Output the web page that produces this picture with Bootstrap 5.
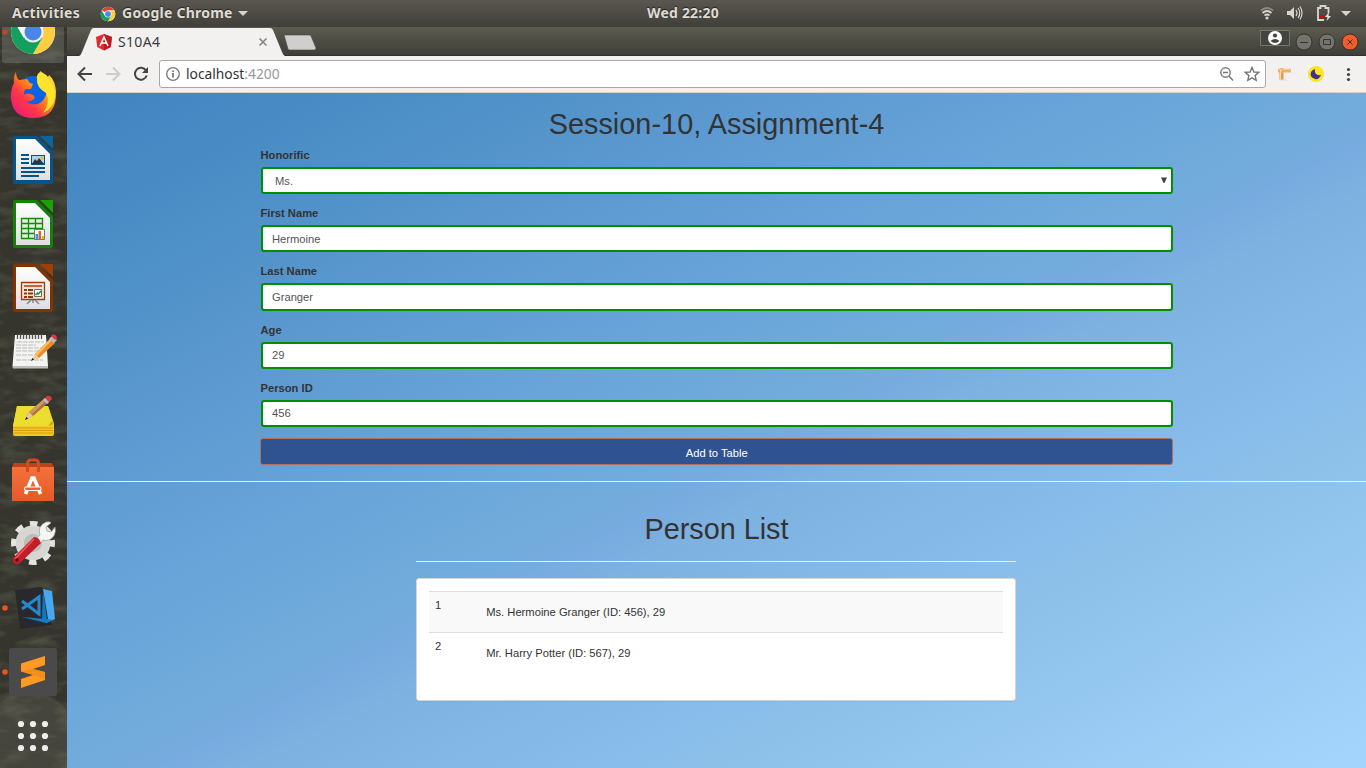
<!DOCTYPE html>
<html lang="en">
<head>
<meta charset="utf-8">
<title>S10A4</title>
<meta name="viewport" content="width=device-width, initial-scale=1">
<link href="https://cdn.jsdelivr.net/npm/bootstrap@5.3.0/dist/css/bootstrap.min.css" rel="stylesheet">
<style>
body{font-family:"Liberation Sans",Arial,sans-serif;font-size:11.2px;line-height:16px;color:#333}
svg{display:block;flex:none}
.screen{width:1366px;height:768px}
.topbar{height:27px;background:linear-gradient(#59574f,#403f39);color:#dfdbd2;font:700 14px/25px "Noto Sans",sans-serif;text-shadow:0 -1px 1px #222}
.topbar span{height:27px}
.topbar .act{margin-left:12px;width:88px;letter-spacing:.3px}
.topbar .app{margin-left:6px;width:116px;letter-spacing:.25px}
.topbar .clock{margin-left:399px;width:78px;letter-spacing:.2px}
.launcher{width:67px;background:#35352e;height:741px}
.launcher svg.slot{position:relative}
.pull{margin-top:-27px}
.tabs{height:29px;background:linear-gradient(#5c5b4f,#3e3d38)}
.toolbar{height:37px;background:#f2f1f0;border-bottom:1px solid #d5d3d0}
.address{height:28px;width:1107px;margin-left:10px;border:1px solid #a9a8a6;border-radius:3px;background:#fff;font:13.8px/26px "Noto Sans",sans-serif;color:#999}
.address b{font-weight:400;color:#333}
.site{background:linear-gradient(to bottom right,#4083c0 0%,#4f91c8 17%,#5c99d0 27%,#69a5d9 41%,#72acdc 51%,#78abdf 53.5%,#7eb3e1 58%,#88bcea 70%,#8cc0e9 74%,#97c9f2 86%,#a4d6fd 100%);height:675px}
.site h2{font-size:28.8px;line-height:32px;font-weight:400;margin:0;text-align:center;color:#333}
.entry{width:912px;margin-left:194px;padding-top:15px}
.entry h2{letter-spacing:.05px;margin-left:-1px}
.field{height:58.2px}
.field label{display:block;font-weight:700;line-height:16px;padding-bottom:4px;margin-left:-.5px}
.field .form-control,.field .form-select{height:27.2px;font-size:11.2px;line-height:16px;padding:3.600px 9px;border:2px solid #008f00;border-radius:3px;color:#555;background-color:#fff;background-image:none}
.field .form-select{padding-left:12px}
.arrow{right:5px;top:10px}
.add{width:913px;height:27px;margin:.2px 0 0 -.8px;border:1px solid #b16f60;border-radius:3px;background:#2f5391;color:#fff;font-size:11.2px;line-height:16px;padding:5px 4px 3px}
.rule{height:1px;background:#eee}
.people{width:600px;margin-left:349px}
.people h2{padding-left:1px}
.panel-box{margin-top:16px;height:123px;border:1px solid #d5d5d5;border-radius:3px;background:#fff;padding:12px;box-shadow:0 1px 1px rgba(0,0,0,.05)}
.list-rows{--bs-table-bg:transparent;margin:0;color:#333}
.list-rows td{border-top:1px solid #ddd;border-bottom:0;height:41px;padding:5px 6px;line-height:16px;vertical-align:top;color:#333}
.list-rows td+td{padding-top:12px;padding-left:6.200px}
.list-rows tr:first-child td{background:#f9f9f9}
</style>
</head>
<body>
<svg width="0" height="0" class="position-absolute"><defs>
<symbol id="chrome" viewBox="0 0 48 48"><circle cx="24" cy="24" r="22" fill="#fff"/><path d="M24 24 5 13A22 22 0 0 1 43 13H24z" fill="#dc4437"/><path d="M43 13A22 22 0 0 1 24 46l9.5-16.500L33.500 18.500 24 13z" fill="#ffcd40"/><path d="M5 13A22 22 0 0 0 24 46L33.500 29.500 14.500 29.500z" fill="#13a05d"/><circle cx="24" cy="24" r="10.500" fill="#f1f1f1"/><circle cx="24" cy="24" r="8.500" fill="#4a86e8"/></symbol>
<linearGradient id="ff" x1="1" y1="0" x2="0" y2="1"><stop offset="0" stop-color="#fff44f"/><stop offset=".4" stop-color="#ff980e"/><stop offset=".65" stop-color="#ff3647"/><stop offset="1" stop-color="#e31587"/></linearGradient>
<linearGradient id="paper" x1="0" y1="0" x2="0" y2="1"><stop offset="0" stop-color="#fff"/><stop offset="1" stop-color="#dedede"/></linearGradient>
<linearGradient id="bag" x1="0" y1="0" x2="0" y2="1"><stop offset="0" stop-color="#f4713b"/><stop offset="1" stop-color="#e55a2b"/></linearGradient>
<filter id="grain" x="0" y="0" width="1" height="1"><feTurbulence type="fractalNoise" baseFrequency=".035 .09" numOctaves="3" seed="8"/><feColorMatrix values="0 0 0 0 .27  0 0 0 0 .30  0 0 0 0 .17  1.8 0 0 0 -.8"/></filter>
</defs></svg>
<div class="screen overflow-hidden">
<header class="topbar d-flex align-items-center text-nowrap">
<span class="act">Activities</span>
<svg width="16" height="16"><use href="#chrome"/></svg><span class="app">Google Chrome</span>
<svg width="10" height="6"><path d="M0 0h10L5 5z" fill="#d8d5cd"/></svg>
<span class="clock">Wed 22:20</span>
<svg width="106" height="27" viewBox="1260 0 106 27" class="ms-auto" fill="none" stroke="#d8d5cd" stroke-width="1.700"><path d="M1261 10.500q6-5 12 0" stroke="#8b8982"/><path d="M1262.500 13q4.500-4 9 0M1264.500 15.500q2.500-2 5 0"/><circle cx="1267" cy="18" r="1.600" fill="#d8d5cd" stroke="none"/><path d="M1287 11h3l4-4v12l-4-4h-3z" fill="#d8d5cd" stroke="none"/><path d="M1296 10q2 3 0 6M1298 8q3.500 5 0 10M1300 6.500q4 6.500 0 13" stroke-width="1.200"/><path d="M1324 20h-6V8h2.500V6h5v2h3v5" stroke-width="1.800"/><path d="M1320 15.500h4v2.500h-4z" fill="#d00" stroke="none"/><path d="M1329 12l-4 5h2.500l-1 4 4.500-5h-2.500z" fill="#e5e2da" stroke="none"/><path d="M1341 11h10l-5 5z" fill="#d8d5cd" stroke="none"/></svg>
</header>
<div class="d-flex">
<aside class="launcher position-relative overflow-hidden">
<svg class="position-absolute top-0 start-0" width="67" height="741"><rect width="67" height="741" filter="url(#grain)" opacity=".35"/><path d="M0 677q18-18 45-9 18 7 22 18v55H0z" fill="#6d6b61" opacity=".3"/></svg>
<div class="pull d-flex flex-column">
<svg class="slot" width="66" height="64"><rect x="2" y="8" width="62" height="55" rx="3" fill="#fff" opacity=".14"/><circle cx="5" cy="32" r="2.700" fill="#b64b26"/><use href="#chrome" x="9" y="8" width="48" height="48"/></svg>
<svg class="slot" width="66" height="64" viewBox="0 64 66 64"><circle cx="34" cy="95" r="19" fill="#0a62e8"/><path d="M16 72q0 5 3 8l8-1 3 4 3 1-2 5h-5q-3 2-2 6 3-3 9 0 4 3-2 6l-5 1q12 6 18-3 5-8 0-14-5-6-4-14 7 4 8 6l1-2q6 5 7 16 1 27-22 27Q11 118 11 96q0-8 3-13-1-6 2-11z" fill="url(#ff)"/><path d="M37 79q-1-4 3-7 8 4 9 7 7 10 6 17-1 12-12 17 8-10 3-20-10-6-9-14z" fill="#ffe42d"/></svg>
<svg class="slot" width="66" height="64" viewBox="0 128 66 64"><path d="M13 138q0-2 2-2h22l16 16v30q0 2-2 2H15q-2 0-2-2z" fill="#07548a"/><path d="M40 136h13v13z" fill="#0a649f"/><path d="M16 139h19l15 15v26H16z" fill="url(#paper)"/><path d="M21 155h8m-8 4h8m-8 4h8m-8 5h24m-24 4h24m-24 4h18" stroke="#07548a" stroke-width="2"/><path d="M31 155h14v10H31z" fill="#07548a"/><path d="M32 156h12v7H32z" fill="#a5d4ed"/><path d="M32 164l3-5 2 2 2-3 5 6z" fill="#333"/><circle cx="42" cy="158" r="1.500" fill="#eeb932"/></svg>
<svg class="slot" width="66" height="64" viewBox="0 192 66 64"><path d="M13 202q0-2 2-2h22l16 16v30q0 2-2 2H15q-2 0-2-2z" fill="#138007"/><path d="M40 200h13v13z" fill="#18a303"/><path d="M16 203h19l15 15v27H16z" fill="url(#paper)"/><path d="M21.500 218.500h21v20h-21zM21.500 223.500h21m-21 5h21m-21 5h21m-14-15v20m7-20v20" fill="#ddf0d8" stroke="#128c06" stroke-width="1.300"/><path d="M34.500 229.500h10v10h-10z" fill="#fff" stroke="#777"/><path d="M35.500 234h2.500v5h-2.500z" fill="#2e9fe6"/><path d="M38.500 231h2.500v8h-2.500z" fill="#e06518"/><path d="M42 236h2v3h-2z" fill="#e9b91e"/></svg>
<svg class="slot" width="66" height="64" viewBox="0 256 66 64"><path d="M13 266q0-2 2-2h22l16 16v30q0 2-2 2H15q-2 0-2-2z" fill="#823300"/><path d="M40 264h13v13z" fill="#a33e03"/><path d="M16 267h19l15 15v27H16z" fill="url(#paper)"/><path d="M21.500 282.500h23v17h-23z" fill="#f5e6db" stroke="#a23f08" stroke-width="1.300"/><path d="M24 286h18" stroke="#c96531" stroke-width="2"/><path d="M24 290h3m-3 3.500h3m-3 3.500h3m1-7h5m-5 3.500h5m-5 3.500h5" stroke="#8b3a10" stroke-width="1.800"/><path d="M34.500 289.500h7v7h-7z" fill="#fff" stroke="#666"/><path d="M35.500 295l2-2 1 1 2.500-3" stroke="#149a2e" stroke-width="1.500" fill="none"/><path d="M33 300v3m-2-3-4 4m8-4 4 4" stroke="#888" stroke-width="1.600"/></svg>
<svg class="slot" width="66" height="64" viewBox="0 320 66 64"><path d="M15 335h31l2 31q0 2-2 2H14q-2 0-1.500-2z" fill="#f3f3f1"/><path d="M13 366h35v2.500H13z" fill="#bbb"/><path d="M17 342h27m-28 3h20m-20 3h27m-27 3h23m-23 4h17m-17 5h27" stroke="#bbb" stroke-dasharray="5 1"/><path d="M17.500 339v-5m3 5v-5m3 5v-5m3 5v-5m3 5v-5m3 5v-5m3 5v-5m3 5v-5m3 5v-5" stroke="#555" stroke-width="1.300"/><path d="M32 360l3-6 15-15 5 4-16 15z" fill="#ee8b22"/><path d="M35 354l15-15 2 1-15 16z" fill="#ffbb62"/><path d="M32 360l3-6 4 4z" fill="#efd0a2"/><path d="M31 361l1.500-3 1.500 1.500z" fill="#111"/><path d="M49 339l3-3 5 4-3 3z" fill="#bbb"/><path d="M51 336q3-4 6 1 0 2-2 3z" fill="#e9314c"/></svg>
<svg class="slot" width="66" height="64" viewBox="0 384 66 64"><path d="M17 406h31l6 18v10q0 2-2 2H15q-2 0-2-2v-8z" fill="#f1c824"/><path d="M17 406h31l6 18-5 2H13z" fill="#eddd2e"/><path d="M13 428h40m-40 2.500h40m-40 2.500h40" stroke="#dd9d12"/><path d="M48 426l6-2-2-3z" fill="#c1ae22"/><path d="M25 420l4-8 16-14 4 4-16 14z" fill="#a97046"/><path d="M29 412l16-14 2 2-15 14z" fill="#d29760"/><path d="M25 420l4-8 4 4z" fill="#e8c99c"/><path d="M25 420l1.500-3 1.500 1.500z"/><path d="M45 398l2-2q4-1 5 3l-3 3z" fill="#d93b3a"/><path d="M43 400l2-2 4 4-2 2z" fill="#bbb"/></svg>
<svg class="slot" width="66" height="64" viewBox="0 448 66 64"><path d="M14 463h38l2 4v34H12v-34z" fill="#bd421b"/><path d="M12 467h42v34H12z" fill="url(#bag)"/><path d="M27.500 472v-8q0-4 3-4h5q3 0 3 4v8" fill="none" stroke="#d34b20" stroke-width="3"/><path d="M25.500 494l6.500-16h2l6.500 16" fill="none" stroke="#fff" stroke-width="3.500"/><path d="M25.500 487h15q1 2 0 3.500h-15q-2-2 0-3.500z" fill="#e9622f" stroke="#fff" stroke-width="1.200"/></svg>
<svg class="slot" width="66" height="64" viewBox="0 512 66 64"><circle cx="33" cy="543" r="13" fill="none" stroke="#d6d6d3" stroke-width="9"/><circle cx="33" cy="543" r="19.500" fill="none" stroke="#e3e3e0" stroke-width="5" stroke-dasharray="7.700 7.620" stroke-dashoffset="3.800"/><circle cx="33" cy="543" r="9" fill="#bdbdba"/><path d="M34 541l6-6q-3-9 6-13 4-1 5 1l-5 4 1 4 4 1 4-5q2 9-6 13-4 1-6 0l-4 5z" fill="#f5f5f3" stroke="#999" stroke-width=".7"/><path d="M34 537q5 0 7 6L20 563q-4 3-7-1-1-3 1-5z" fill="#c51e2a"/><path d="M34 539 15 559" stroke="#ea5960" stroke-width="1.600"/><circle cx="17" cy="560" r="1.700" fill="#64050c"/></svg>
<svg class="slot" width="66" height="64" viewBox="0 576 66 64"><circle cx="5" cy="608" r="2.800" fill="#e95420"/><path d="M15 590l27-3 10 38-32 4z" fill="#29292d"/><path d="M43 589l9 2 3 28-9 4-2-3 4-1z" fill="#46a8ee"/><path d="M43 589l-1 30 5 1z" fill="#1475bb"/><path d="M22 617l24 2 8 1-8 3z" fill="#157cc6"/><path d="M22 609 39 597v17L22 601" fill="none" stroke="#2489ce" stroke-width="3"/></svg>
<svg class="slot" width="66" height="64" viewBox="0 640 66 64"><circle cx="5" cy="672" r="2.800" fill="#e95420"/><rect x="9" y="648" width="48" height="48" rx="3" fill="#4a4a4a"/><path d="M21 663.500l24-7.500v9l-12 4 12 3v8l-24 8v-9l12-4-12-3.500z" fill="#ff9a22"/><path d="M21 671l24 8v-7l-12-3z" fill="#ef8515" opacity=".65"/></svg>
<svg class="slot" width="66" height="64" viewBox="0 704 66 64" fill="#eeeeec"><g id="dots"><circle cx="21" cy="724" r="3.100"/><circle cx="33" cy="724" r="3.100"/><circle cx="45" cy="724" r="3.100"/></g><use href="#dots" y="12"/><use href="#dots" y="24"/></svg>
</div>
</aside>
<main>
<div class="tabs">
<svg width="1299" height="29" viewBox="67 27 1299 29"><path d="M67 55.500h1299" stroke="#33322e"/><path d="M79 56q2-1 3-4l9-22q1-2 3-2h176q2 0 3 2l9 22q1 3 3 4z" fill="#f2f1f0"/><path d="M284 35h25q2 0 2 1l5 12q0 2-2 2h-24q-2 0-2-1z" fill="#d0cfcd" stroke="#44433e" stroke-width=".6"/><path d="M96 37l8-3 8 3-1.200 10L104 50.500 97.200 47z" fill="#e22b30"/><path d="M104 34l8 3-1.200 10-6.800 3.500z" fill="#b81d23"/><path d="M100 46l4-9 4 9m-6.500-3h5" fill="none" stroke="#fff" stroke-width="1.500"/><text x="118" y="47" font-family="Noto Sans,sans-serif" font-size="14" fill="#3c3c3c" textLength="42">S10A4</text><path d="M259.500 38.500l7 7m0-7-7 7" stroke="#888" stroke-width="1.700"/><path d="M1260.500 30.500h29v15h-29z" fill="#454540" stroke="#77766e"/><circle cx="1275" cy="38" r="7" fill="#fff"/><circle cx="1275" cy="35.500" r="2.100" fill="#454540"/><path d="M1270.500 41q4.500-4 9 0-4.500 4-9 0z" fill="#454540"/><g stroke="#34332f"><circle cx="1304" cy="42" r="8" fill="#75746c"/><circle cx="1327" cy="42" r="8" fill="#75746c"/><circle cx="1350" cy="42" r="8" fill="#f15d2a"/><path d="M1300 42.500h8M1323.500 39.500h7v5h-7zM1347.500 39.500l5 5m0-5-5 5" fill="none"/></g></svg>
</div>
<div class="toolbar d-flex align-items-center">
<svg width="82" height="36" viewBox="67 56 82 36" fill="none" stroke="#444" stroke-width="2"><path d="M92 74H79m6-6.500L78.500 74l6.500 6.500"/><path d="M106 74h13m-6-6.500 6.500 6.500-6.500 6.500" stroke="#ccc"/><path d="M146 70.500a6 6 0 1 0 .7 5"/><path d="M148 67v6h-6z" fill="#444" stroke="none"/></svg>
<div class="address d-flex align-items-center">
<svg width="26" height="26" viewBox="160 61 26 26"><circle cx="173" cy="74" r="6.300" fill="none" stroke="#777" stroke-width="1.300"/><path d="M173 73v4.500m0-7v1.500" stroke="#666" stroke-width="1.600"/></svg>
<span><b>localhost</b>:4200</span>
<svg class="ms-auto" width="50" height="26" viewBox="1215 61 50 26" fill="none" stroke="#777" stroke-width="1.400"><circle cx="1225.500" cy="72.500" r="4.700"/><path d="M1223 72.500h5m1 3.500 4 4.500M1252 67.500l1.900 4.500 4.900.4-3.700 3.200 1.100 4.800-4.200-2.500-4.200 2.500 1.100-4.800-3.700-3.200 4.900-.4z"/></svg>
</div>
<svg width="100" height="36" viewBox="1266 56 100 36"><path d="M1279.500 68h4v12h-4z" fill="#e59a48"/><path d="M1278 69h13v3.500h-13z" fill="#edb16a"/><path d="M1278 69h13M1280.500 70v10" stroke="#ffd8a4"/><path d="M1279 80h8" stroke="#ddd"/><circle cx="1316" cy="74" r="8" fill="#f8e71f"/><path d="M1315 69q-1 7 6 6-2 5-6 4-6-2-4-7 1-2 4-3z" fill="#40308c"/><g fill="#444"><circle cx="1348.500" cy="69.500" r="1.600"/><circle cx="1348.500" cy="74.500" r="1.600"/><circle cx="1348.500" cy="79.500" r="1.600"/></g></svg>
</div>
<div class="site">
<form class="entry">
<h2>Session-10, Assignment-4</h2>
<div style="height:7px"></div>
<div class="field"><label>Honorific</label><div class="position-relative"><select class="form-select"><option>Ms.</option></select><svg class="arrow position-absolute" width="8" height="7"><path d="M1 .5h6L4.500 6h-1z" fill="#444"/></svg></div></div>
<div class="field"><label>First Name</label><input class="form-control" value="Hermoine"></div>
<div class="field"><label>Last Name</label><input class="form-control" value="Granger"></div>
<div class="field"><label>Age</label><input class="form-control" value="29"></div>
<div class="field"><label>Person ID</label><input class="form-control" value="456"></div>
<button type="button" class="btn add d-block">Add to Table</button>
</form>
<div class="rule" style="margin-top:15.800px"></div>
<section class="people">
<h2 style="margin-top:31px">Person List</h2>
<div class="rule" style="margin-top:16px"></div>
<div class="panel-box"><table class="table list-rows"><tbody><tr><td style="width:51px">1</td><td>Ms. Hermoine Granger (ID: 456), 29</td></tr><tr><td>2</td><td>Mr. Harry Potter (ID: 567), 29</td></tr></tbody></table></div>
</section>
</div>
</main>
</div>
</div>
<script src="https://cdn.jsdelivr.net/npm/bootstrap@5.3.0/dist/js/bootstrap.bundle.min.js"></script>
</body>
</html>
